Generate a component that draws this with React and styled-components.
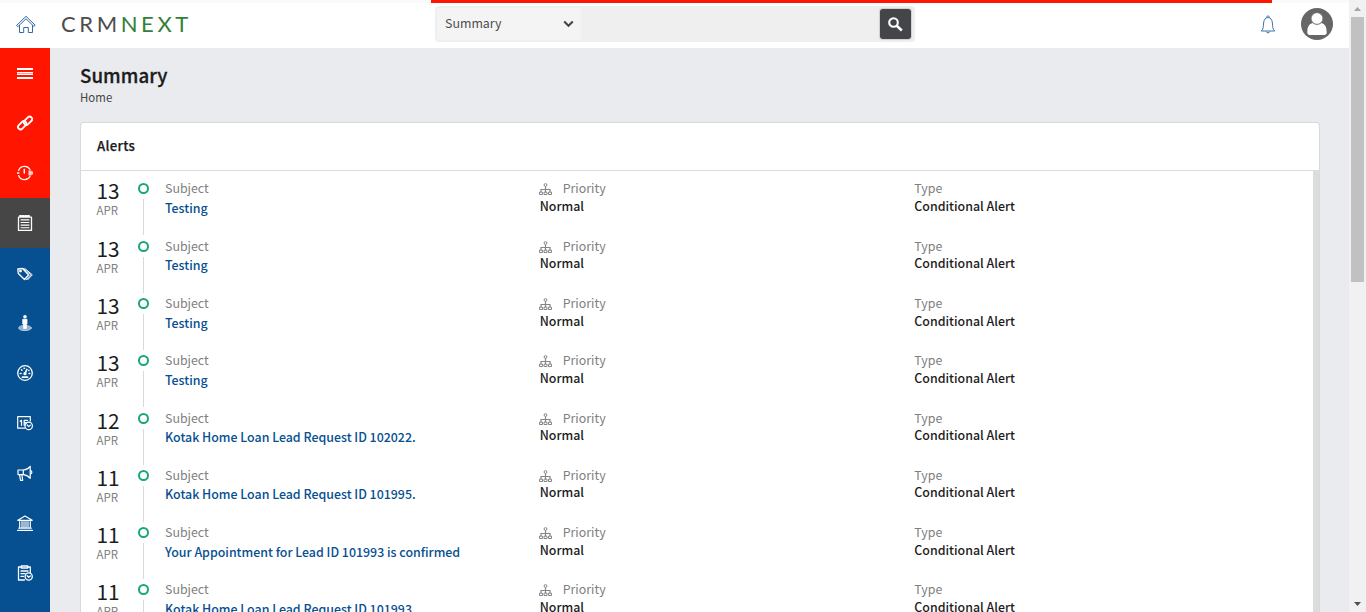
import React from "react";
import styled, { createGlobalStyle } from "styled-components";

const GlobalStyle = createGlobalStyle`
  * { box-sizing: border-box; }
  html, body { margin: 0; height: 100%; overflow: hidden; }
  body {
    background: #e9ebef;
    color: #1c1c1c;
    font-family: "Source Sans Pro", "Noto Sans CJK SC", "Noto Sans", sans-serif;
    font-size: 12.4px;
    line-height: 20px;
  }
`;

const Window = styled.div`
  display: flex;
  width: 100%;
  height: 612px;
  overflow: hidden;
`;

const Page = styled.div`
  flex: 1;
  min-width: 0;
  display: flex;
  flex-direction: column;
`;

const LoadTrack = styled.div`
  height: 3px;
  flex: none;
  background: #fafafa;
  padding-left: 431px;
`;

const LoadBar = styled.div`
  width: 841px;
  height: 3px;
  background: #ff1500;
`;

const Header = styled.header`
  height: 45px;
  flex: none;
  display: flex;
  align-items: flex-start;
  background: #fff;
`;

const HomeLink = styled.a`
  width: 50px;
  padding: 12px 0 0 16px;
  line-height: 0;
`;

const Logo = styled.div`
  width: 385px;
  padding: 6px 0 0 11px;
  font-family: Lato, sans-serif;
  font-size: 22px;
  line-height: 30px;
  letter-spacing: 3.6px;
  color: #4d4d4d;
`;

const LogoAccent = styled.span`
  color: #34803a;
`;

const SearchBox = styled.div`
  display: flex;
  align-items: center;
  width: 480px;
  height: 36px;
  margin-top: 3px;
  padding: 2px 4px 2px 2px;
  border-radius: 4px;
  background: #efefef;
`;

const ScopeSelect = styled.div`
  display: flex;
  justify-content: space-between;
  align-items: center;
  width: 144px;
  height: 32px;
  padding: 0 7px 0 8px;
  margin-right: auto;
  border-radius: 3px;
  background: #f4f4f4;
  color: #4c4c4c;
`;

const ScopeName = styled.span`
  padding-bottom: 2px;
`;

const SearchButton = styled.button`
  display: flex;
  align-items: center;
  justify-content: center;
  width: 31px;
  height: 30px;
  padding: 0;
  border: 0;
  border-radius: 3px;
  background: #444548;
  box-shadow: 0 0 1px 1px #cfcfcf;
`;

const HeaderTools = styled.div`
  display: flex;
  align-items: center;
  gap: 25px;
  margin-left: auto;
  padding: 5px 16px 0 0;
  line-height: 0;
`;

const Body = styled.div`
  display: flex;
  flex: 1;
  min-height: 0;
`;

const Sidebar = styled.nav`
  width: 50px;
  flex: none;
  background: #064f91;
`;

const tones = { alert: "#ff1500", active: "#464646", plain: "#064f91" };

const NavItem = styled.a`
  display: flex;
  align-items: center;
  justify-content: center;
  height: 50px;
  background: ${(p) => tones[p.$tone]};
  line-height: 0;
`;

const Main = styled.main`
  flex: 1;
  min-width: 0;
  display: flex;
  flex-direction: column;
  padding: 15px 29px 0 30px;
`;

const Title = styled.h1`
  margin: 0;
  font-size: 18.7px;
  line-height: 24px;
  font-weight: 500;
  letter-spacing: 0.05px;
  -webkit-text-stroke: 0.3px #1c1c1c;
`;

const Crumb = styled.div`
  font-size: 11.4px;
  line-height: 20px;
  color: #444;
  letter-spacing: 0.05px;
`;

const Card = styled.section`
  flex: 1;
  min-height: 0;
  display: flex;
  flex-direction: column;
  margin-top: 15px;
  border: 1px solid #d9d9d9;
  border-bottom: 0;
  border-radius: 4px 4px 0 0;
  background: #fff;
`;

const CardHeader = styled.h2`
  flex: none;
  height: 48px;
  margin: 0;
  padding: 0 16px;
  border-bottom: 1px solid #dcdcdc;
  font-size: 13.2px;
  line-height: 46px;
  font-weight: 500;
  letter-spacing: 0.3px;
  -webkit-text-stroke: 0.25px #1c1c1c;
`;

const ListArea = styled.div`
  flex: 1;
  min-height: 0;
  display: flex;
`;

const List = styled.div`
  flex: 1;
  overflow: hidden;
  padding: 7.9px 24px 0 15px;
`;

const ListScroll = styled.div`
  width: 6px;
  background: #dcdcdc;
`;

const Row = styled.article`
  display: flex;
  height: 57.3px;
`;

const DateCell = styled.div`
  width: 42px;
  padding-left: 0.5px;
  color: #808080;
  font-size: 11.5px;
  line-height: 14px;
`;

const Day = styled.div`
  margin-top: -0.5px;
  padding-bottom: 1px;
  color: #1c1c1c;
  font-size: 20.8px;
  line-height: 24px;
`;

const Track = styled.div`
  display: flex;
  flex-direction: column;
  align-items: center;
  gap: 5px;
  width: 11px;
  margin-right: 16px;
  padding-top: 4.5px;
`;

const Dot = styled.span`
  width: 11px;
  height: 11px;
  flex: none;
  border: 2px solid #1aa67c;
  border-radius: 50%;
`;

const Line = styled.span`
  width: 1px;
  height: 36px;
  background: #d9d9d9;
`;

const Field = styled.div`
  flex: 1;
  min-width: 0;
`;

const Label = styled.div`
  display: flex;
  align-items: center;
  height: 19px;
  color: #808080;
`;

const LabelIcon = styled.span`
  margin: 2px 11px 0 -1px;
  line-height: 0;
`;

const Value = styled.div`
  height: 18px;
  margin-top: -0.9px;
  line-height: 18px;
  padding-top: ${(p) => (p.$link ? 2 : 0)}px;
  color: ${(p) => (p.$link ? "#064f91" : "#1c1c1c")};
  font-weight: 500;
  white-space: nowrap;
`;

const PageScroll = styled.div`
  display: flex;
  flex-direction: column;
  justify-content: space-between;
  align-items: center;
  width: 17px;
  background: #f1f1f1;
`;

const ScrollEnd = styled.div`
  display: flex;
  align-items: center;
  justify-content: center;
  height: 17px;
`;

const Thumb = styled.div`
  width: 13px;
  height: 265px;
  margin-bottom: auto;
  background: #c1c1c1;
`;

const Icon = ({ size = 16, color = "#fff", w = 1, vb = 16, children }) => (
  <svg width={size} height={size} viewBox={`0 0 ${vb} ${vb}`} fill="none" stroke={color}
    strokeWidth={w} strokeLinecap="round" strokeLinejoin="round">
    {children}
  </svg>
);

const HomeIcon = () => (
  <Icon size={20} vb={20} color="#336aa3">
    <path d="M.8 10.2 10 1.3l9.200 8.900-1.300 1.200L10 3.800l-7.900 7.600z" />
    <path d="M3.500 10.500V17.500h4.200v-5h4.600v5h4.200v-7" />
  </Icon>
);

const BellIcon = () => (
  <svg width="16" height="20" viewBox="0 0 16 20" fill="none" stroke="#3976aa" strokeLinejoin="round">
    <path d="M6.500 3.500c0-2 3-2 3 0M1.300 17c2.300-2 2-5 2.300-8C3.900 5.500 5.500 3.500 8 3.500s4.100 2 4.400 5.500c.3 3 0 6 2.300 8z" />
    <path d="M6.200 17.500c.5 1.800 3.100 1.800 3.600 0" />
  </svg>
);

const Avatar = () => (
  <svg width="32" height="32" viewBox="0 0 32 32">
    <circle cx="16" cy="16" r="16" fill="#666" />
    <path d="M6.300 24.500c0-5.500 1.600-8.700 5.500-9.500 2.300 2.200 6.100 2.200 8.400 0 3.900.8 5.500 4 5.500 9.500 0 1.500-.9 2.500-2.500 2.500H8.800c-1.600 0-2.500-1-2.500-2.500z" fill="#fff" />
    <circle cx="16" cy="10.500" r="5.800" fill="#fff" stroke="#777" strokeWidth=".7" />
  </svg>
);

const MenuIcon = () => (
  <svg width="16" height="16" viewBox="0 0 16 16" fill="#fff">
    <path d="M0 3h16v2H0zM0 7h16v1H0zM0 9h16v1H0zM0 12h16v2H0z" />
    <path d="M0 8h16v1H0z" opacity=".6" />
  </svg>
);

const LinkIcon = () => (
  <Icon w={1.900}>
    <rect x="6.200" y="3.200" width="9.600" height="5" rx="2.500" transform="rotate(-45 11 5.700)" />
    <rect x=".4" y="7.800" width="9.600" height="5" rx="2.500" transform="rotate(-45 5.200 10.300)" />
  </Icon>
);

const TimerIcon = () => (
  <Icon w={1.200}>
    <path d="M1.600 5.500A6.300 6.300 0 0 1 13 4.500M1.600 10.500A6.300 6.300 0 0 0 13 11.500" />
    <path d="M0 8h1.800M7.300 4.500V8" strokeWidth="1.500" />
    <path d="M11.500 5.500h3v5h-3zM14.500 6.500H16v3h-1.500z" fill="#fff" stroke="none" opacity=".8" />
  </Icon>
);

const ListIcon = () => (
  <Icon w={1.100}>
    <path d="M1.500 2.200h13v13.200h-13z" strokeWidth="1.300" />
    <path d="M3 1h10" strokeWidth="2" strokeDasharray="1.200 1.400" />
    <path d="M4 4.900h8M4 7.500h8M4 10.100h8M4 12.700h8" />
  </Icon>
);

const TagsIcon = () => (
  <Icon w={1.300}>
    <path d="M.8 4 5.500 3.500l6 6.300-4 4.700-6.200-6z" />
    <path d="M7.800 3.500l7.500 6.300-4.600 4.900M6.500 3.500l7.200 6.300-4.500 4.900" strokeWidth="1" />
    <circle cx="3.500" cy="6.100" r=".8" />
  </Icon>
);

const PersonIcon = () => (
  <Icon>
    <ellipse cx="8" cy="13" rx="6.300" ry="2.600" fill="#8fb1d1" stroke="#b9cde0" />
    <circle cx="8" cy="1.800" r="1.800" fill="#fff" stroke="none" />
    <path d="M6 4.300h4v4.700H9.400v4.500H6.600V9H6z" fill="#fff" strokeWidth=".8" />
  </Icon>
);

const GaugeIcon = () => (
  <Icon w={1.300}>
    <circle cx="8" cy="8" r="7.300" />
    <path d="M8 8.500 9.800 4.500M5.500 12.200h5" strokeWidth="1.700" />
    <path d="M3.300 8.500h.8M12 8.500h.8M4.500 4.800l.5.500M7 3.300h.5M11.800 5.500l.2-.2" strokeWidth="1.500" />
    <circle cx="8" cy="8.700" r="1" fill="#fff" />
  </Icon>
);

const CalendarIcon = () => (
  <Icon w={1.200}>
    <path d="M7.500 13.200H.7V1.700h12.600V6" />
    <path d="M3.200 6.200l1.300-.9v5M7.200 10.300V5.300h3.300M7.200 7.700h2" strokeWidth="1.300" />
    <circle cx="11.700" cy="10.900" r="3.700" />
    <path d="M10.200 10l1.500 1.600 1.700-1.500" />
  </Icon>
);

const MegaphoneIcon = () => (
  <Icon w={1.200}>
    <path d="M1 5h5.500c3-.3 5.300-1.800 6.700-3.700v12C11.700 11.300 9.500 10 6.500 9.600H1z" />
    <path d="M13.600 5.600c1.700.4 1.700 2.900 0 3.400M6.300 5v4.500M2.500 9.700l1 5.600h2.200L4.900 10" />
  </Icon>
);

const BankIcon = () => (
  <Icon w={1.200}>
    <path d="M.8 5.300 8 1l7.200 4.300zM1.800 13.200h12.400M.6 15.400h14.800" />
    <path d="M2.700 6.500v6M5 6.500v6M7 6.500v6M9 6.500v6M11 6.500v6M13.300 6.500v6" />
  </Icon>
);

const ReportIcon = () => (
  <Icon w={1.300}>
    <path d="M7.500 15H1.500V2H4M11 2h2.300v5.500M4.300 1h6.400v2H4.300z" />
    <path d="M4 6h7M4 8.700h4M4 11.400h2.500" />
    <circle cx="11.700" cy="11.500" r="3.600" />
    <path d="M10.200 10.800l1.500 1.500 1.600-1.400" />
  </Icon>
);

const HierarchyIcon = () => (
  <svg width="13" height="12" viewBox="0 0 13 12" fill="none" stroke="#858585" strokeWidth="1">
    <circle cx="6.500" cy="2" r="1.400" />
    <path d="M6.500 3.400V9M2 9V6.500h9V9" strokeWidth="1.200" />
    <path d="M.5 11.500V9.200h3v2.300zM5 11.500V9.200h3v2.300zM9.500 11.500V9.200h3v2.300z" />
  </svg>
);

const nav = [
  ["alert", MenuIcon], ["alert", LinkIcon], ["alert", TimerIcon], ["active", ListIcon],
  ["plain", TagsIcon], ["plain", PersonIcon], ["plain", GaugeIcon], ["plain", CalendarIcon],
  ["plain", MegaphoneIcon], ["plain", BankIcon], ["plain", ReportIcon],
];

const alerts = [
  ["13", "Testing"],
  ["13", "Testing"],
  ["13", "Testing"],
  ["13", "Testing"],
  ["12", "Kotak Home Loan Lead Request ID 102022."],
  ["11", "Kotak Home Loan Lead Request ID 101995."],
  ["11", "Your Appointment for Lead ID 101993 is confirmed"],
  ["11", "Kotak Home Loan Lead Request ID 101993."],
];

const AlertRow = ({ day, subject }) => (
  <Row>
    <DateCell><Day>{day}</Day>APR</DateCell>
    <Track><Dot /><Line /></Track>
    <Field><Label>Subject</Label><Value $link>{subject}</Value></Field>
    <Field><Label><LabelIcon><HierarchyIcon /></LabelIcon>Priority</Label><Value>Normal</Value></Field>
    <Field><Label>Type</Label><Value>Conditional Alert</Value></Field>
  </Row>
);

export default function App() {
  return (
    <Window>
      <GlobalStyle />
      <Page>
        <LoadTrack><LoadBar /></LoadTrack>
        <Header>
          <HomeLink><HomeIcon /></HomeLink>
          <Logo>CRM<LogoAccent>NEXT</LogoAccent></Logo>
          <SearchBox>
            <ScopeSelect>
              <ScopeName>Summary</ScopeName>
              <svg width="11" height="8" viewBox="0 0 11 8" fill="none" stroke="#444" strokeWidth="2">
                <path d="M1.200 1.500 5.500 5.800 9.800 1.500" />
              </svg>
            </ScopeSelect>
            <SearchButton>
              <svg width="15" height="15" viewBox="0 0 15 15" fill="none" stroke="#fff">
                <circle cx="5.500" cy="5.500" r="4.300" strokeWidth="2.100" />
                <path d="M8.700 8.800 13.800 13.500" strokeWidth="2.600" />
              </svg>
            </SearchButton>
          </SearchBox>
          <HeaderTools><BellIcon /><Avatar /></HeaderTools>
        </Header>
        <Body>
          <Sidebar>
            {nav.map(([tone, Glyph], i) => (
              <NavItem key={i} $tone={tone}><Glyph /></NavItem>
            ))}
          </Sidebar>
          <Main>
            <Title>Summary</Title>
            <Crumb>Home</Crumb>
            <Card>
              <CardHeader>Alerts</CardHeader>
              <ListArea>
                <List>
                  {alerts.map(([day, subject], i) => (
                    <AlertRow key={i} day={day} subject={subject} />
                  ))}
                </List>
                <ListScroll />
              </ListArea>
            </Card>
          </Main>
        </Body>
      </Page>
      <PageScroll>
        <ScrollEnd>
          <svg width="7" height="4" viewBox="0 0 7 4"><path d="M0 4 3.500 0 7 4z" fill="#a3a3a3" /></svg>
        </ScrollEnd>
        <Thumb />
        <ScrollEnd>
          <svg width="7" height="4" viewBox="0 0 7 4"><path d="M0 0 3.500 4 7 0z" fill="#505050" /></svg>
        </ScrollEnd>
      </PageScroll>
    </Window>
  );
}
